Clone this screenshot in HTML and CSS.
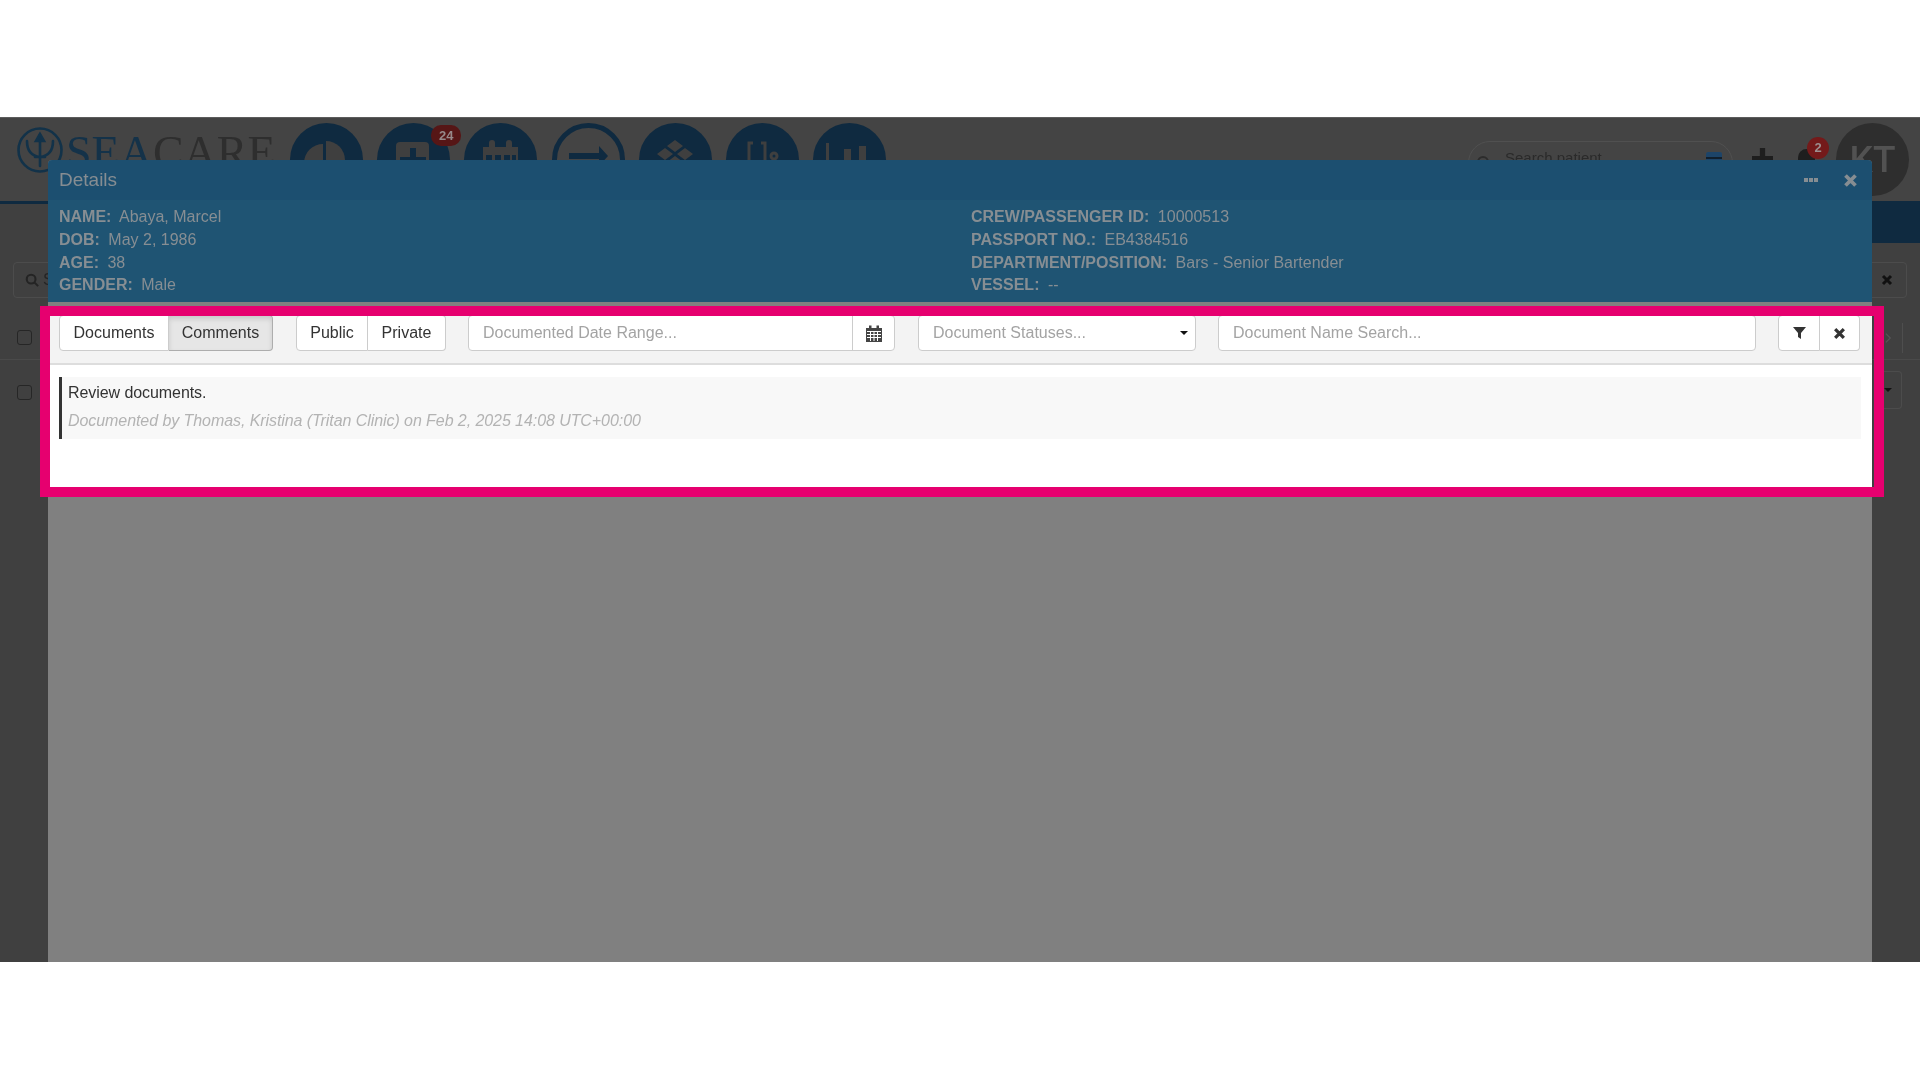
FILE: index.html
```html
<!DOCTYPE html>
<html lang="en">
  <head>
    <meta charset="utf-8" />
    <meta name="viewport" content="width=device-width, initial-scale=1" />
    <title>SeaCare - Details</title>
    <link rel="stylesheet" href="styles.css">
  </head>
  <body>
    <div class="stage">
      <!-- Dimmed page behind the modal -->
      <header class="main-header">
        <div class="logo">
          <svg class="logo-mark" viewBox="0 0 46 46" fill="none" stroke="currentColor" stroke-width="2.6" stroke-linecap="round">
            <circle cx="23" cy="23" r="21.5"></circle>
            <path d="M23 8v31M18 30h10M10 14c0 10 4 15 13 16c9-1 13-6 13-16"></path>
            <path d="M23 7l-4 7h8z" fill="currentColor"></path>
          </svg>
          <span class="logo-text"><span class="logo-sea">SEA</span>CARE</span>
        </div>
        <nav class="main-nav">
          <span class="nav-circle">
            <svg viewBox="0 0 73 73"><path d="M33 21a19 19 0 1 0 19 19h-19z"></path><path d="M36 18v19h19a19 19 0 0 0-19-19z"></path></svg>
          </span>
          <span class="nav-circle">
            <svg viewBox="0 0 73 73"><path d="M19 23a4 4 0 0 1 4-4h25a4 4 0 0 1 4 4v34H19z"></path><path class="cut" d="M33 25h6v9h10v6H23v-6h10z"></path></svg>
            <span class="nav-badge">24</span>
          </span>
          <span class="nav-circle">
            <svg viewBox="0 0 73 73"><path d="M19 24h6v-4a3 3 0 0 1 6 0v4h11v-4a3 3 0 0 1 6 0v4h6v40H19z"></path><path class="cut" d="M22 32h6v6h-6zM31 32h6v6h-6zM40 32h6v6h-6zM48 32h4v6h-4z"></path></svg>
          </span>
          <span class="nav-circle nav-circle-line">
            <svg viewBox="0 0 73 73"><path class="arrow" d="M17 30h30v-7l9 10l-9 10v-7H17z"></path></svg>
          </span>
          <span class="nav-circle">
            <svg viewBox="0 0 73 73"><path d="M36 17l8 6l-8 6l-8-6zM26 25l8 6l-8 6l-8-6zM46 25l8 6l-8 6l-8-6zM36 33l8 6l-8 6l-8-6z"></path></svg>
          </span>
          <span class="nav-circle">
            <svg viewBox="0 0 73 73"><path class="stroke" d="M27 20h-4v18M35 20h4v18"></path><circle class="stroke" cx="48" cy="33" r="3"></circle></svg>
          </span>
          <span class="nav-circle">
            <svg viewBox="0 0 73 73"><path d="M13 20h3v28h-3zM31 26h7v22h-7zM46 23h7v25h-7z"></path></svg>
          </span>
        </nav>
        <div class="header-tools">
          <div class="patient-search">
            <svg class="search-icon" viewBox="0 0 16 16" fill="none" stroke="currentColor" stroke-width="2"><circle cx="7" cy="7" r="5"></circle><path d="M11 11l4 4"></path></svg>
            <span class="patient-search-text">Search patient</span>
            <span class="card-icon"></span>
          </div>
          <svg class="plus-icon" viewBox="0 0 20 20"><path d="M7.500 0h5v7.500h7.500v5h-7.500v7.500h-5v-7.500H0v-5h7.500z"></path></svg>
          <span class="bell">
            <span class="bell-shape"></span>
            <span class="bell-badge">2</span>
          </span>
          <span class="avatar">KT</span>
        </div>
      </header>
      <div class="sub-band"></div>
      <div class="page-search">
        <div class="page-search-box">
          <svg viewBox="0 0 16 16" fill="none" stroke="currentColor" stroke-width="2.400"><circle cx="7" cy="7" r="5"></circle><path d="M11 11l4 4"></path></svg>
          <span>S</span>
        </div>
        <div class="page-clear">
          <svg viewBox="0 0 12 12"><path class="x-thick" d="M2 2l8 8M10 2l-8 8"></path></svg>
        </div>
      </div>
      <div class="page-row page-row-first">
        <span class="page-check"></span>
        <span class="row-end">
          <svg class="row-chevron" viewBox="0 0 8 12" fill="none" stroke="currentColor" stroke-width="1.500"><path d="M1 1l5 5l-5 5"></path></svg>
          <span class="row-rule"></span>
        </span>
      </div>
      <div class="page-row">
        <span class="page-check"></span>
        <span class="row-menu"><span class="row-caret"></span></span>
      </div>

      <!-- Details modal -->
      <section class="modal">
        <div class="modal-title">
          <span>Details</span>
          <span class="modal-actions">
            <span class="dots"><i></i><i></i><i></i></span>
            <svg class="modal-close" viewBox="0 0 12 12"><path class="x-thick" d="M2 2l8 8M10 2l-8 8"></path></svg>
          </span>
        </div>
        <div class="patient-info">
          <div class="info-col">
            <p><b>NAME:</b> Abaya, Marcel</p>
            <p><b>DOB:</b> May 2, 1986</p>
            <p><b>AGE:</b> 38</p>
            <p><b>GENDER:</b> Male</p>
          </div>
          <div class="info-col">
            <p><b>CREW/PASSENGER ID:</b> 10000513</p>
            <p><b>PASSPORT NO.:</b> EB4384516</p>
            <p><b>DEPARTMENT/POSITION:</b> Bars - Senior Bartender</p>
            <p><b>VESSEL:</b> --</p>
          </div>
        </div>
        <div class="modal-body">
          <div class="toolbar">
            <div class="btn-group tabs-group">
              <button class="btn btn-documents">Documents</button>
              <button class="btn btn-active btn-comments">Comments</button>
            </div>
            <div class="btn-group scope-group">
              <button class="btn btn-public">Public</button>
              <button class="btn btn-private">Private</button>
            </div>
            <div class="field date-field">
              <span class="placeholder">Documented Date Range...</span>
              <span class="field-addon">
                <svg viewBox="0 0 16 17" width="16" height="17">
                  <path d="M3 0.500h2.500v2.500h5v-2.500h2.500v2.500h3v14h-16v-14h3z"></path>
                  <path class="cal-grid" d="M1 6.500h14M1 9.500h14M1 12.500h14M4.500 6v10M8 6v10M11.500 6v10"></path>
                </svg>
              </span>
            </div>
            <div class="field status-field">
              <span class="placeholder">Document Statuses...</span>
              <span class="status-caret"></span>
            </div>
            <div class="field name-field">
              <span class="placeholder">Document Name Search...</span>
            </div>
            <div class="btn-group filter-group">
              <button class="btn btn-icon btn-filter">
                <svg viewBox="0 0 13 12" width="13" height="12"><path d="M0 0h13l-5 6v6l-3-2v-4z"></path></svg>
              </button>
              <button class="btn btn-icon btn-clear">
                <svg viewBox="0 0 12 12" width="13" height="13"><path class="x-thick" d="M2 2l8 8M10 2l-8 8"></path></svg>
              </button>
            </div>
          </div>
          <div class="comment">
            <p class="comment-text">Review documents.</p>
            <p class="comment-meta">Documented by Thomas, Kristina (Tritan Clinic) on Feb 2, 2025 14:08 UTC+00:00</p>
          </div>
        </div>
        <div class="modal-rest"></div>
        <!-- Highlight frame drawn over the toolbar and comment -->
        <div class="highlight"></div>
      </section>
    </div>
  </body>
</html>
```

FILE: styles.css
```css
/* Base */
body {
  margin: 0;
  background: #fff;
  font-family: "Liberation Sans", Arial, sans-serif;
  font-size: 16px;
  color: #333;
}

p {
  margin: 0;
}

button {
  font: inherit;
}

/* Screenshot band, white above and below */
.stage {
  position: relative;
  margin-top: 117px;
  height: 845px;
  overflow: hidden;
  background: #404040;
  border-top: 1px solid #5c5c5c;
  box-sizing: border-box;
  filter: blur(0.4px);
}

/* Dimmed page header */
.main-header {
  display: flex;
  height: 86px;
  padding: 5px 11px 0 17px;
  box-sizing: border-box;
  border-bottom: 3px solid #0f2a40;
  background: #444;
}

.logo {
  display: flex;
  align-items: flex-start;
  width: 273px;
  flex: none;
}

.logo-mark {
  width: 46px;
  height: 46px;
  margin-top: 4px;
  color: #123249;
  flex: none;
}

.logo-text {
  margin: 2px 0 0 3px;
  font-family: "Liberation Serif", serif;
  font-size: 46px;
  line-height: 56px;
  color: #2e2e2e;
  white-space: nowrap;
}

.logo-sea {
  color: #143249;
}

.main-nav {
  display: flex;
  gap: 14.2px;
}

.nav-circle {
  position: relative;
  display: block;
  width: 73px;
  height: 73px;
  border-radius: 50%;
  background: #0f2a40;
  box-sizing: border-box;
}

.nav-circle svg {
  display: block;
  width: 73px;
  height: 73px;
  fill: #3f3f3f;
}

.nav-circle svg .cut {
  fill: #0f2a40;
}

.nav-circle svg .stroke {
  fill: none;
  stroke: #3f3f3f;
  stroke-width: 3;
}

.nav-circle-line {
  background: none;
  border: 5px solid #0f2a40;
}

.nav-circle-line svg {
  margin: -5px;
}

.nav-circle-line svg .arrow {
  fill: #0f2a40;
}

.nav-badge {
  position: absolute;
  top: 2px;
  right: -11px;
  width: 30px;
  height: 21px;
  border-radius: 10px;
  background: #561616;
  color: #96898a;
  font-size: 13px;
  font-weight: 700;
  line-height: 21px;
  text-align: center;
}

.header-tools {
  display: flex;
  align-items: flex-start;
  margin-left: auto;
}

.patient-search {
  display: flex;
  align-items: flex-start;
  width: 265px;
  height: 44px;
  margin-top: 18px;
  padding: 0 10px 0 7px;
  box-sizing: border-box;
  border: 1px solid #505050;
  border-radius: 22px;
  color: #2c2c2c;
}

.search-icon {
  width: 16px;
  height: 16px;
  margin: 13px 0 0 0;
  color: #2c2c2c;
  flex: none;
}

.patient-search-text {
  margin: 7px 0 0 13px;
  font-size: 15px;
  color: #2a2a2a;
}

.card-icon {
  width: 16px;
  height: 20px;
  margin: 10px 0 0 auto;
  border-radius: 2px;
  background: linear-gradient(to bottom, #1d4468 0 5px, #111f2c 5px 7px, #1d4468 7px);
}

.plus-icon {
  width: 21px;
  height: 21px;
  margin: 25px 0 0 19px;
  fill: #1e1e1e;
  flex: none;
}

.bell {
  position: relative;
  width: 38px;
  height: 60px;
  margin-left: 25px;
  flex: none;
}

.bell-shape {
  position: absolute;
  top: 26px;
  left: 0;
  width: 17px;
  height: 20px;
  border-radius: 9px 9px 0 0;
  background: #1e1e1e;
}

.bell-badge {
  position: absolute;
  top: 14px;
  left: 9px;
  width: 22px;
  height: 22px;
  border-radius: 50%;
  background: #741a1a;
  color: #9c8f8f;
  font-size: 13px;
  font-weight: 700;
  line-height: 22px;
  text-align: center;
}

.avatar {
  display: block;
  width: 73px;
  height: 73px;
  flex: none;
  border-radius: 50%;
  background: #2e2e2e;
  color: #525252;
  font-family: Roboto, sans-serif;
  font-size: 37px;
  font-weight: 500;
  line-height: 73px;
  text-align: center;
}

.sub-band {
  height: 39px;
  margin-left: 400px;
  background: #0f2a40;
}

/* Dimmed page content */
.page-search {
  display: flex;
  justify-content: space-between;
  height: 70px;
  padding: 19px 13px 0 13px;
  box-sizing: border-box;
}

.page-search-box {
  display: flex;
  align-items: center;
  gap: 4px;
  width: 200px;
  height: 36px;
  padding-left: 11px;
  box-sizing: border-box;
  border: 1px solid #4c4c4c;
  border-radius: 4px;
  color: #242424;
}

.page-search-box svg {
  width: 14px;
  height: 14px;
}

.page-clear {
  display: flex;
  align-items: center;
  justify-content: center;
  width: 40px;
  height: 36px;
  box-sizing: border-box;
  border: 1px solid #4c4c4c;
  border-radius: 4px;
  color: #111;
}

.page-clear svg {
  width: 12px;
  height: 12px;
}

.page-row {
  display: flex;
  align-items: center;
  justify-content: space-between;
  height: 65px;
  padding: 0 18px 0 17px;
  box-sizing: border-box;
}

.page-row-first {
  height: 47px;
  padding-top: 3px;
  border-bottom: 1px solid #4a4a4a;
}

.page-check {
  width: 13px;
  height: 13px;
  border: 1px solid #262626;
  border-radius: 3px;
}

.row-end {
  display: flex;
  align-items: center;
  gap: 10px;
  margin-right: -1px;
  color: #555;
}

.row-chevron {
  width: 7px;
  height: 12px;
}

.row-rule {
  width: 1px;
  height: 30px;
  background: #4e4e4e;
}

.row-menu {
  display: flex;
  align-items: center;
  justify-content: center;
  width: 26px;
  height: 36px;
  margin-top: -6px;
  border: 1px solid #4c4c4c;
  border-left: 0;
  border-radius: 0 4px 4px 0;
}

.row-caret {
  border: 4px solid transparent;
  border-top-color: #111;
  border-bottom: 0;
}

/* Details modal */
.modal {
  position: absolute;
  top: 42px;
  bottom: 0;
  left: 48px;
  width: 1824px;
  display: flex;
  flex-direction: column;
  background: #808080;
  border-radius: 4px 4px 0 0;
}

.modal-title {
  display: flex;
  align-items: center;
  justify-content: space-between;
  height: 40px;
  padding: 0 14px 0 11px;
  box-sizing: border-box;
  background: #1c4f70;
  border-radius: 4px 4px 0 0;
  color: #868d92;
  font-size: 19px;
}

.modal-actions {
  display: flex;
  align-items: center;
  gap: 25px;
}

.dots {
  display: flex;
  gap: 1px;
}

.dots i {
  width: 4px;
  height: 4px;
  background: #868d92;
}

.modal-close {
  width: 15px;
  height: 15px;
  color: #868d92;
}

.x-thick {
  fill: none;
  stroke: currentColor;
  stroke-width: 3;
}

.patient-info {
  display: flex;
  height: 102px;
  padding: 6px 11px 0;
  box-sizing: border-box;
  background: #1f5473;
  color: #878e93;
  line-height: 22.8px;
}

.info-col {
  width: 912px;
  flex: none;
}

.info-col b {
  margin-right: 4px;
}

.modal-body {
  margin-top: 4px;
  background: #fff;
  height: 191px;
  flex: none;
}

.toolbar {
  display: flex;
  height: 59px;
  padding: 9px 11px 0;
  box-sizing: border-box;
  background: #f3f3f3;
  border-bottom: 2px solid #ddd;
}

/* Toolbar controls */
.btn-group {
  display: flex;
  flex: none;
}

.btn {
  height: 36px;
  padding: 0;
  background: #fff;
  border: 1px solid #ccc;
  color: #333;
  text-align: center;
}

.btn + .btn {
  border-left: 0;
}

.btn-group .btn:first-child {
  border-radius: 4px 0 0 4px;
}

.btn-group .btn:last-child {
  border-radius: 0 4px 4px 0;
}

.btn-documents {
  width: 110px;
}

.btn-comments {
  width: 104px;
}

.btn-active {
  background: #e6e6e6;
  border-color: #adadad;
  box-shadow: inset 0 3px 5px rgba(0, 0, 0, 0.125);
}

.btn-public {
  width: 72px;
}

.btn-private {
  width: 78px;
}

.btn-icon {
  display: flex;
  align-items: center;
  justify-content: center;
  fill: #333;
  color: #333;
}

.btn-filter {
  width: 42px;
}

.btn-clear {
  width: 40px;
}

.scope-group {
  margin-left: 23px;
}

.field {
  display: flex;
  align-items: center;
  height: 36px;
  box-sizing: border-box;
  padding-left: 14px;
  background: #fff;
  border: 1px solid #ccc;
  border-radius: 4px;
  flex: none;
}

.placeholder {
  color: #a3a3a3;
}

.date-field {
  width: 427px;
  margin-left: 22px;
  padding-right: 0;
}

.field-addon {
  display: flex;
  align-items: center;
  justify-content: center;
  width: 41px;
  height: 100%;
  margin-left: auto;
  border-left: 1px solid #ccc;
  fill: #444;
}

.cal-grid {
  fill: none;
  stroke: #fff;
  stroke-width: 1;
}

.status-field {
  width: 278px;
  margin-left: 23px;
}

.status-caret {
  margin: 0 7px 0 auto;
  border: 4px solid transparent;
  border-top-color: #111;
  border-bottom: 0;
}

.name-field {
  width: 538px;
  margin-left: 22px;
}

.filter-group {
  margin-left: 22px;
}

/* Comment entry */
.comment {
  height: 62px;
  margin: 12px 11px 0;
  padding: 2px 6px 0;
  box-sizing: border-box;
  background: #f8f8f8;
  border-left: 3px solid #333;
  letter-spacing: -0.07px;
  line-height: 28px;
}

.comment-meta {
  font-style: italic;
  color: #b3b3b3;
}

.modal-rest {
  flex: 1;
}

.highlight {
  position: absolute;
  top: 146px;
  left: -8px;
  width: 1844px;
  height: 191px;
  box-sizing: border-box;
  border: 10px solid #e6006f;
}
```
